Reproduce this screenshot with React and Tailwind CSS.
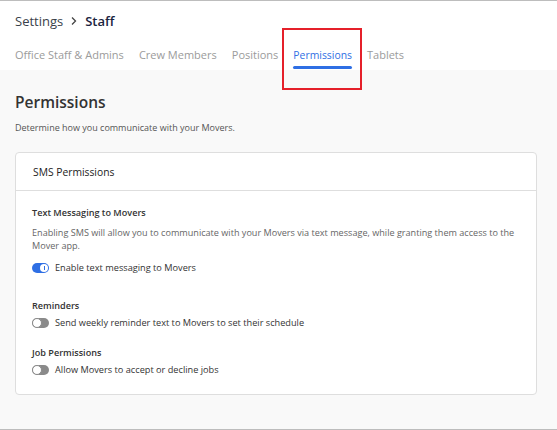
import React from "react";

const Toggle = ({ on }) => {
  if (on) {
    return (
      <span className="relative inline-flex h-[10px] w-[17px] shrink-0 items-center rounded-full bg-[#2f6fe4]">
        <span className="absolute right-[1px] flex h-[8px] w-[8px] items-center justify-center rounded-full bg-white">
          <span className="h-[4px] w-[1px] bg-[#2f6fe4]"></span>
        </span>
      </span>
    );
  }
  return (
    <span className="relative inline-flex h-[10px] w-[17px] shrink-0 items-center rounded-full bg-[#8a8a8a]">
      <span className="absolute left-0 h-[10px] w-[10px] rounded-full border border-[#8a8a8a] bg-white"></span>
    </span>
  );
};

const tabs = ["Office Staff & Admins", "Crew Members", "Positions", "Permissions", "Tablets"];

const App = () => {
  return (
    <div
      className="relative flex h-[430px] w-[557px] flex-col overflow-hidden border-y border-[#bdbdbd] bg-[#f9f9f9]"
      style={{ fontFamily: '"Open Sans", "Noto Sans", sans-serif' }}
    >
      <div className="bg-white px-[15px] pt-[10px] pb-[1px]">
        <div className="flex items-center gap-[7px] text-[13px] leading-[20px]">
          <span className="text-[#3a3f4a]">Settings</span>
          <svg width="8" height="10" viewBox="0 0 8 10" fill="none">
            <path d="M2 1.5 L5.5 5 L2 8.5" stroke="#444" strokeWidth="1.3" />
          </svg>
          <span className="font-semibold text-[#1b2440]">Staff</span>
        </div>
        <div className="mt-[16px] flex gap-[15px] text-[11px] leading-[16px]">
          {tabs.map((t) => (
            <div key={t} className="flex flex-col items-center">
              <span className={t === "Permissions" ? "text-[10.4px] font-medium text-[#2f6fe4]" : "text-[#9b9b9b]"}>{t}</span>
              <span className={t === "Permissions" ? "mt-[3px] h-[3px] w-full rounded-full bg-[#2f6fe4]" : "mt-[3px] h-[3px] w-full"}></span>
            </div>
          ))}
        </div>
      </div>

      <div className="px-[15px] pt-[21px]">
        <h1 className="text-[15.5px] font-semibold leading-[22px] text-[#333]">Permissions</h1>
        <p className="mt-[8px] text-[9px] leading-[14px] text-[#555]">Determine how you communicate with your Movers.</p>

        <div className="mt-[17px] w-[522px] rounded-[4px] border border-[#dedede] bg-white">
          <div className="border-b border-[#dedede] pl-[17px] pt-[12px] pb-[10px] text-[10.3px] leading-[15px] text-[#222]">
            SMS Permissions
          </div>
          <div className="flex flex-col pl-[16px] pr-[12px] pt-[15px] pb-[17px]">
            <div className="text-[9.1px] font-semibold leading-[14px] text-[#333]">Text Messaging to Movers</div>
            <p className="mt-[6px] text-[9.1px] leading-[13px] text-[#666]">
              Enabling SMS will allow you to communicate with your Movers via text message, while granting them access to the Mover app.
            </p>
            <div className="mt-[9px] flex items-center gap-[6px]">
              <Toggle on />
              <span className="text-[9.2px] leading-[14px] text-[#333]">Enable text messaging to Movers</span>
            </div>

            <div className="mt-[24px] text-[9.1px] font-semibold leading-[14px] text-[#333]">Reminders</div>
            <div className="mt-[3px] flex items-center gap-[6px]">
              <Toggle />
              <span className="text-[9.2px] leading-[14px] text-[#333]">Send weekly reminder text to Movers to set their schedule</span>
            </div>

            <div className="mt-[16px] text-[9.1px] font-semibold leading-[14px] text-[#333]">Job Permissions</div>
            <div className="mt-[3px] flex items-center gap-[6px]">
              <Toggle />
              <span className="text-[9.2px] leading-[14px] text-[#333]">Allow Movers to accept or decline jobs</span>
            </div>
          </div>
        </div>
      </div>

      <div className="pointer-events-none absolute left-[282px] top-[27px] h-[62px] w-[80px] border-2 border-[#e5202a]"></div>
    </div>
  );
};

export default App;
